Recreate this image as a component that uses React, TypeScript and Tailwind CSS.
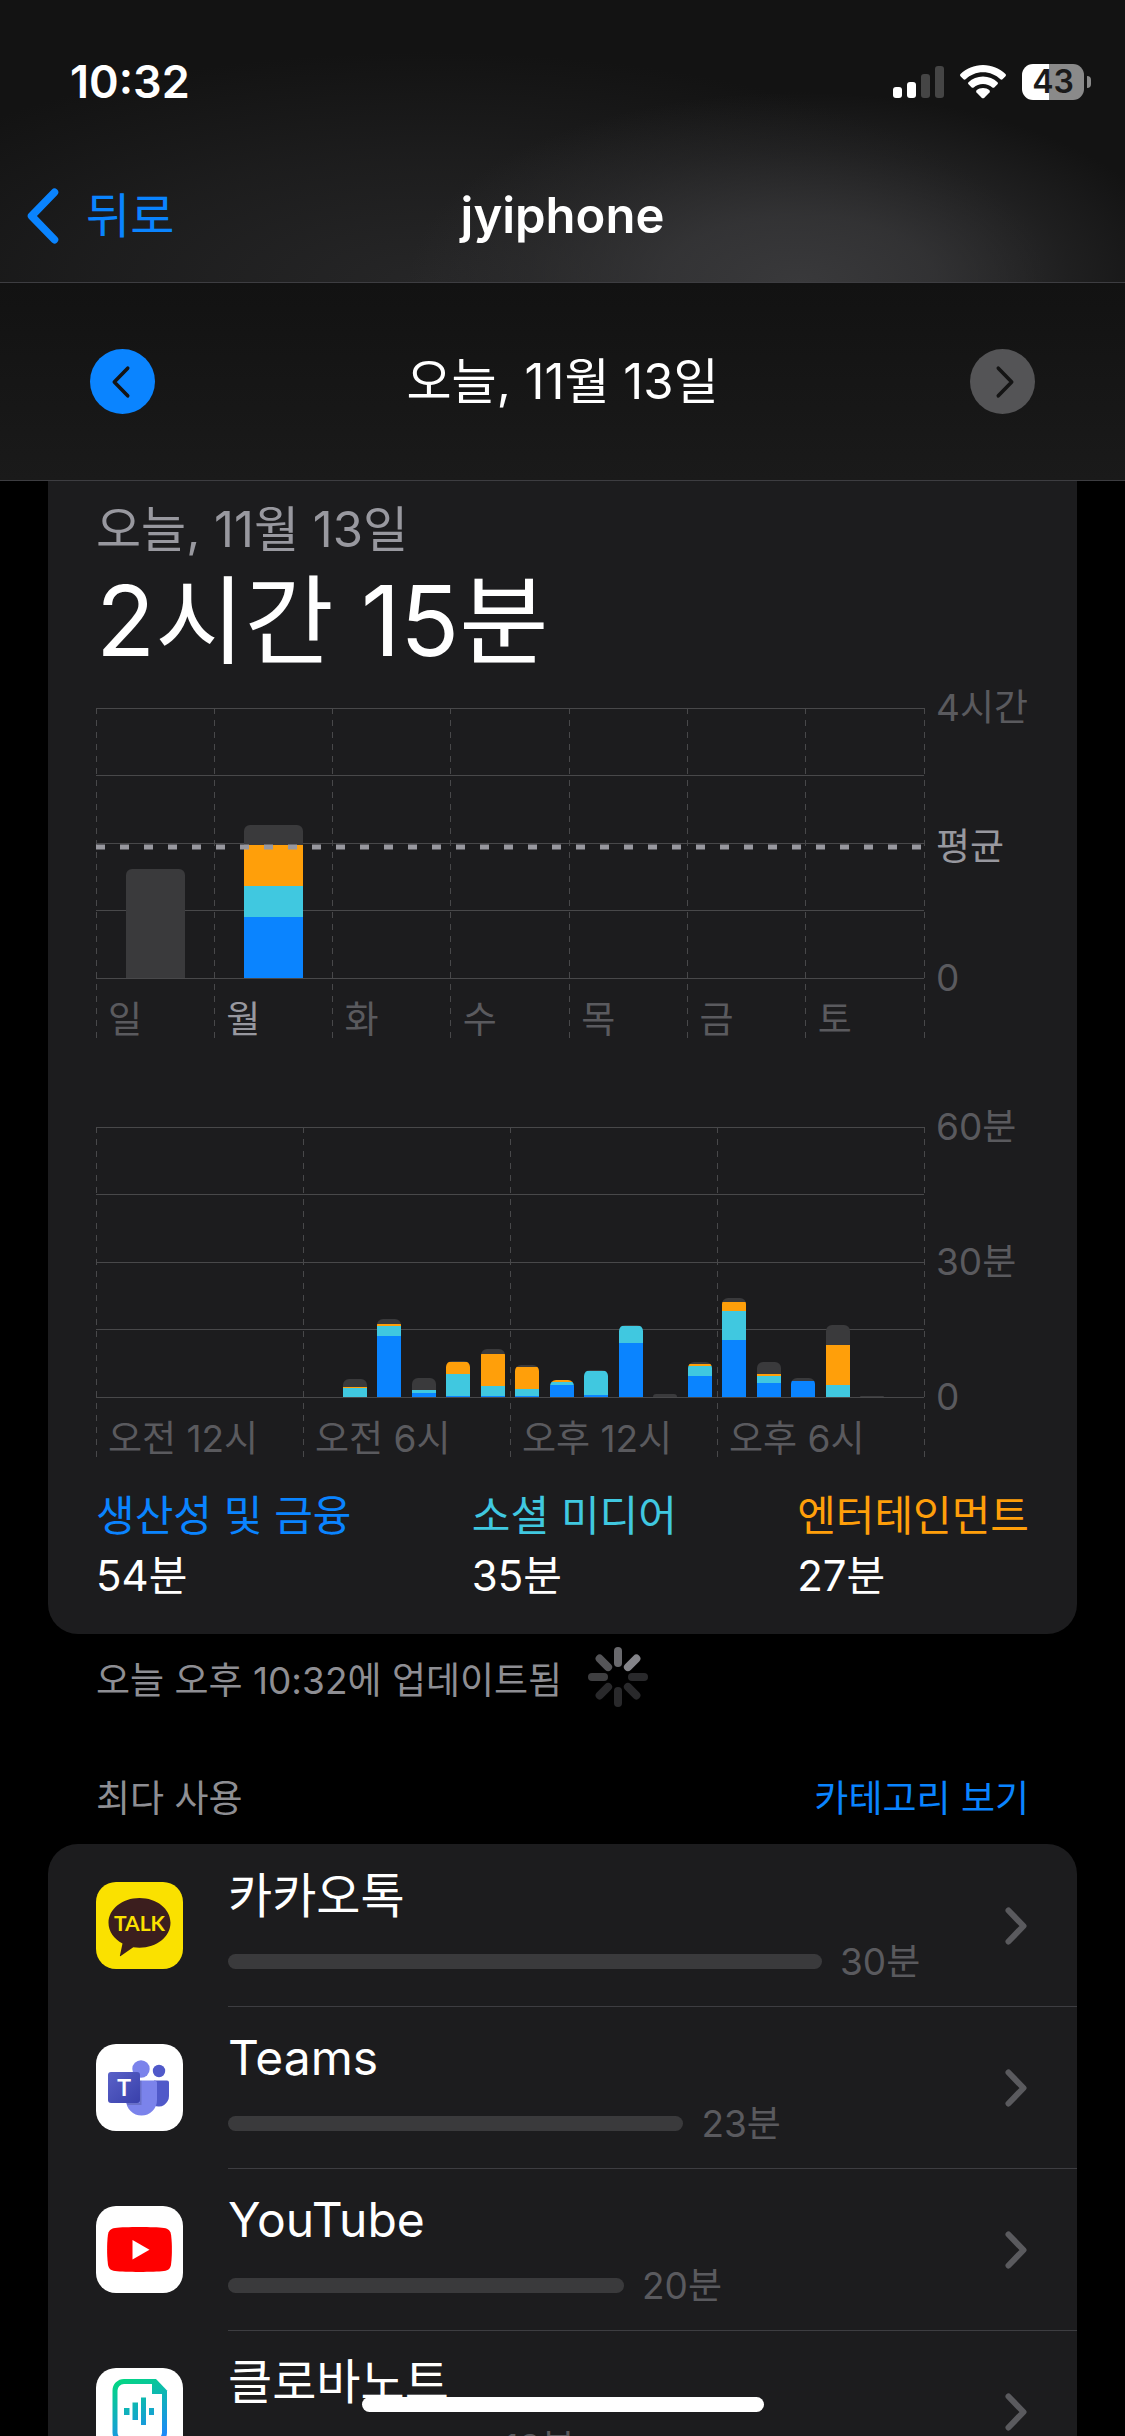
import type { ReactNode } from "react"

type Category = "productivity" | "social" | "entertainment" | "other"

// segment heights are pixels of the plot, listed from top to bottom
interface Bar {
  label: string
  segments: [Category, number][]
}

interface AppUsage {
  name: string
  minutes: number
  icon: ReactNode
}

interface Mark {
  label: string
  at: number
  strong?: boolean
}

const PLOT_HEIGHT = 270
const WEEK_AVERAGE = 139

const FILLS: Record<Category, string> = {
  productivity: "bg-[#0a84ff]",
  social: "bg-[#40c8e0]",
  entertainment: "bg-[#ff9f0a]",
  other: "bg-[#3a3a3c]",
}

const week: Bar[] = [
  { label: "일", segments: [["other", 109]] },
  {
    label: "월",
    segments: [["other", 20], ["entertainment", 41], ["social", 31], ["productivity", 61]],
  },
  { label: "화", segments: [] },
  { label: "수", segments: [] },
  { label: "목", segments: [] },
  { label: "금", segments: [] },
  { label: "토", segments: [] },
]

const HOUR_ORDER: Category[] = ["other", "entertainment", "social", "productivity"]

// one entry per hour, values in HOUR_ORDER
const hourly: number[][] = [
  [], [], [], [], [], [], [],
  [8, 1, 9, 0],
  [5, 2, 10, 61],
  [12, 0, 3, 4],
  [1, 12, 22, 1],
  [5, 32, 10, 1],
  [2, 22, 7, 1],
  [0, 2, 3, 12],
  [1, 0, 24, 2],
  [1, 0, 17, 54],
  [3, 0, 0, 0],
  [2, 2, 10, 21],
  [4, 9, 29, 57],
  [12, 2, 7, 14],
  [3, 0, 0, 16],
  [20, 40, 12, 0],
  [1, 0, 0, 0],
  [],
]

const day: Bar[] = hourly.map((values, hour) => ({
  label: String(hour),
  segments: values.map((value, i) => [HOUR_ORDER[i], value] as [Category, number]),
}))

const legend = [
  { name: "생산성 및 금융", time: "54분", color: "text-[#0a84ff]" },
  { name: "소셜 미디어", time: "35분", color: "text-[#40c8e0]" },
  { name: "엔터테인먼트", time: "27분", color: "text-[#ff9f0a]" },
]

function Chevron({ className, weight, direction }: { className: string; weight: number; direction: "left" | "right" }) {
  return (
    <svg viewBox="0 0 22 38" className={className} fill="none" stroke="currentColor" strokeWidth={weight} strokeLinecap="round" strokeLinejoin="round" aria-hidden="true">
      <path d={direction === "left" ? "M18.5 3.5 3.5 19l15 15.5" : "M3.5 3.5 18.5 19l-15 15.5"} />
    </svg>
  )
}

function StatusBar() {
  return (
    <div className="flex items-center justify-between pt-[54px] pr-[34px] pl-[70px]">
      <time className="text-[45px] leading-[56px] font-semibold">10:32</time>
      <div className="flex items-center gap-4">
        <svg viewBox="0 0 51 33" className="h-[33px] w-[51px]" role="img" aria-label="신호 세기">
          <rect x="0" y="21" width="9" height="11" rx="3" fill="#fff" />
          <rect x="14" y="16" width="9" height="16" rx="3" fill="#fff" />
          <rect x="28" y="8" width="9" height="24" rx="3" fill="#454545" />
          <rect x="42" y="0" width="9" height="32" rx="3" fill="#454545" />
        </svg>
        <svg viewBox="0 0 46 34" className="h-[34px] w-[46px]" fill="#fff" role="img" aria-label="Wi-Fi">
          <path d="M23 0C14.200 0 6.300 3.500.5 9.100c-.6.600-.6 1.500 0 2.100l3 3c.6.600 1.500.600 2.100 0C10.100 9.900 16.200 7.200 23 7.200s12.900 2.700 17.400 7c.6.600 1.500.600 2.100 0l3-3c.6-.6.6-1.500 0-2.100C39.700 3.500 31.800 0 23 0z" />
          <path d="M23 11.500c-5.600 0-10.700 2.200-14.500 5.700-.6.600-.6 1.500 0 2.100l3.200 3.100c.5.600 1.400.600 2 .1 2.500-2.200 5.700-3.500 9.300-3.500s6.800 1.300 9.300 3.500c.6.500 1.500.500 2-.1l3.200-3.100c.6-.6.6-1.500 0-2.100-3.800-3.500-8.900-5.700-14.500-5.700z" />
          <path d="M23 23c-2.500 0-4.700.9-6.400 2.300-.6.600-.6 1.500-.1 2.100l5.400 5.500c.6.600 1.600.600 2.200 0l5.400-5.500c.5-.6.5-1.500-.1-2.100C27.700 23.900 25.500 23 23 23z" />
        </svg>
        <div className="flex items-center gap-[3px]">
          <div className="flex h-9 w-[62px] items-center justify-center rounded-[11px] bg-linear-to-r from-white from-43% to-[#8a8a8a] to-43% text-[32px] leading-9 font-semibold text-[#1a1a1a]">
            43
          </div>
          <div className="h-3 w-1 rounded-r-full bg-[#8a8a8a]" />
        </div>
      </div>
    </div>
  )
}

function Plot({ bars, columns, labels, active, average, barWidth }: {
  bars: Bar[]
  columns: number
  labels: string[]
  active?: number
  average?: number
  barWidth: string
}) {
  return (
    <div className="grid flex-1 grid-rows-[271px_66px]">
      <svg className="col-start-1 row-span-2 row-start-1 h-[330px] w-full overflow-visible" stroke="#48484a" strokeWidth="1" shapeRendering="crispEdges" aria-hidden="true">
        {[0, 67, 135, 202, 270].map((y) => (
          <line key={y} x1="0" x2="100%" y1={y + 0.5} y2={y + 0.5} />
        ))}
        {Array.from({ length: columns + 1 }, (_, i) => (
          <line key={i} x1={`${(i / columns) * 100}%`} x2={`${(i / columns) * 100}%`} y1="0" y2="330" strokeDasharray="6 6" />
        ))}
      </svg>
      <div className="col-start-1 row-start-1 flex h-[270px]">
        {bars.map((bar) => (
          <div key={bar.label} className="flex flex-1 items-end justify-center">
            <div className={`overflow-hidden rounded-t-[6px] ${barWidth}`}>
              {bar.segments.map(([category, height]) => (
                <div key={category} className={FILLS[category]} style={{ height }} />
              ))}
            </div>
          </div>
        ))}
      </div>
      {average !== undefined && (
        <svg className="col-start-1 row-start-1 h-[271px] w-full" aria-hidden="true">
          <line x1="0" x2="100%" y1={average} y2={average} stroke="#98989f" strokeWidth="5" strokeDasharray="9 15" />
        </svg>
      )}
      <div className="col-start-1 row-start-2 flex pt-4 text-[37px] leading-[50px] text-[#5a5a5e]">
        {labels.map((label, i) => (
          <span key={label} className={`flex-1 pl-3 ${i === active ? "text-[#98989f]" : ""}`}>
            {label}
          </span>
        ))}
      </div>
    </div>
  )
}

function Scale({ marks }: { marks: Mark[] }) {
  return (
    <div className="-mt-5 grid w-[105px] content-start items-start pl-3 text-[37px] leading-10 whitespace-nowrap text-[#5a5a5e]">
      {marks.map((mark) => (
        <span key={mark.label} className={`col-start-1 row-start-1 ${mark.strong ? "text-[#98989f]" : ""}`} style={{ marginTop: mark.at }}>
          {mark.label}
        </span>
      ))}
    </div>
  )
}

function Spinner() {
  const shades = ["#69696d", "#848489", "#29292b", "#29292b", "#29292b", "#29292b", "#3f3f41", "#555558"]
  return (
    <svg viewBox="-30 -30 60 60" className="size-[60px]" strokeWidth="8" strokeLinecap="round" role="img" aria-label="로딩 중">
      {shades.map((shade, i) => (
        <line key={i} y1="-14" y2="-26" stroke={shade} transform={`rotate(${i * 45})`} />
      ))}
    </svg>
  )
}

function TalkIcon() {
  return (
    <svg viewBox="0 0 87 87" className="size-full bg-[#fae100]" aria-hidden="true">
      <path d="M43.500 16C26.300 16 12.500 27 12.500 40.800c0 8.700 5.500 16.200 14 20.700l-2.600 12.200c-.1.500.4.700.8.400l12.600-8.900c2 .3 4.100.5 6.200.5 17.200 0 31-11 31-24.900S60.700 16 43.500 16z" fill="#3b1e1e" />
      <text x="43.500" y="49" textAnchor="middle" fontFamily="Lato, sans-serif" fontSize="21" fontWeight="700" fill="#fae100">TALK</text>
    </svg>
  )
}

function TeamsIcon() {
  return (
    <svg viewBox="0 0 87 87" className="size-full bg-white" aria-hidden="true">
      <defs>
        <linearGradient id="teams" x1="0" y1="0" x2="1" y2="1">
          <stop offset="0" stopColor="#5a62c8" />
          <stop offset="1" stopColor="#3940ab" />
        </linearGradient>
      </defs>
      <circle cx="63" cy="27" r="6.200" fill="#5059c9" />
      <path d="M58 36.500h13a2 2 0 0 1 2 2V52a10.500 10.500 0 0 1-15 9.500z" fill="#5059c9" />
      <circle cx="45" cy="25" r="8.700" fill="#7b83eb" />
      <path d="M30 36.500h28.500a2.500 2.500 0 0 1 2.500 2.500v17a15.500 15.500 0 0 1-31 0z" fill="#7b83eb" />
      <path d="M44 36.500h1.500V61H31.500a15 15 0 0 1-1-2H44z" fill="#000" opacity="0.15" />
      <rect x="12" y="28" width="32" height="31" rx="3" fill="url(#teams)" />
      <text x="28" y="52" textAnchor="middle" fontSize="23" fontWeight="600" fill="#fff">T</text>
    </svg>
  )
}

function YouTubeIcon() {
  return (
    <svg viewBox="0 0 87 87" className="size-full bg-white" aria-hidden="true">
      <path d="M43.500 21c-10 0-19 .3-24.500.9-4.500.5-6.600 3-7.100 7.100-.6 5-.8 9.500-.8 14.500s.2 9.500.8 14.500c.5 4.100 2.600 6.600 7.100 7.100 5.500.6 14.500.9 24.500.9s19-.3 24.500-.9c4.500-.5 6.600-3 7.100-7.100.6-5 .8-9.500.8-14.500s-.2-9.500-.8-14.500c-.5-4.100-2.600-6.600-7.100-7.100-5.500-.6-14.500-.9-24.500-.9z" fill="#f00" />
      <path d="M36.500 34v19.500L53.500 43.700z" fill="#fff" />
    </svg>
  )
}

function ClovaNoteIcon() {
  return (
    <svg viewBox="0 0 87 87" className="size-full bg-white" aria-hidden="true">
      <defs>
        <linearGradient id="clova" gradientUnits="userSpaceOnUse" x1="30" y1="11" x2="55" y2="76">
          <stop offset="0" stopColor="#04d585" />
          <stop offset="1" stopColor="#1f84ff" />
        </linearGradient>
      </defs>
      <path d="M59 13.500H28a9 9 0 0 0-9 9v42a9 9 0 0 0 9 9h31.500a9 9 0 0 0 9-9V24" fill="none" stroke="url(#clova)" strokeWidth="5" />
      <path d="M56 11h4l11 11.500V26H56z" fill="url(#clova)" />
      <path d="M28 40h5.500v7H28zM36.500 34.500H42V52h-5.500zM45 29.500h5V57h-5zM53 40h5v7h-5z" fill="url(#clova)" />
    </svg>
  )
}

const apps: AppUsage[] = [
  { name: "카카오톡", minutes: 30, icon: <TalkIcon /> },
  { name: "Teams", minutes: 23, icon: <TeamsIcon /> },
  { name: "YouTube", minutes: 20, icon: <YouTubeIcon /> },
  { name: "클로바노트", minutes: 13, icon: <ClovaNoteIcon /> },
]

function AppRow({ app, longest, first }: { app: AppUsage; longest: number; first: boolean }) {
  return (
    <li>
      <button type="button" className="flex w-full items-center pl-12 text-left">
        <span className="size-[87px] shrink-0 overflow-hidden rounded-[20px]">{app.icon}</span>
        <span className={`ml-[45px] flex h-[162px] flex-1 items-center border-t pr-[50px] ${first ? "border-transparent" : "border-[#3d3d41]"}`}>
          <span className="flex flex-1 flex-col pr-[90px]">
            <span className="text-[48px] leading-[72px]">{app.name}</span>
            <span className="flex items-center gap-[18px] pr-[93px] text-[37px] leading-[60px] whitespace-nowrap text-[#5a5a5e]">
              <span className="h-[15px] shrink-0 rounded-full bg-[#3a3a3c]" style={{ width: `${(app.minutes / longest) * 100}%` }} />
              {app.minutes}분
            </span>
          </span>
          <Chevron className="h-[38px] w-[22px] text-[#5a5a5e]" weight={6} direction="right" />
        </span>
      </button>
    </li>
  )
}

export default function App() {
  const longest = Math.max(...apps.map((app) => app.minutes))

  return (
    <div className="relative flex h-screen flex-col overflow-hidden bg-black font-['Inter','Noto_Sans_CJK_KR',sans-serif] text-white">
      <header className="h-[283px] shrink-0 border-b border-[#3d3d41] bg-[#131313] bg-[radial-gradient(ellipse_390px_190px_at_71%_100%,#39393bff_0%,#39393bc8_35%,#39393b50_70%,#39393b00_100%),radial-gradient(ellipse_620px_230px_at_38%_100%,#262627ff_0%,#26262780_55%,#26262700_100%)]">
        <StatusBar />
        <nav className="grid grid-cols-3 items-center px-[26px] pt-[66px]">
          <a href="#back" className="flex items-center gap-[26px] text-[48px] leading-[80px] text-[#0a84ff]">
            <Chevron className="h-[58px] w-[34px]" weight={5} direction="left" />
            뒤로
          </a>
          <h1 className="text-center text-[49px] leading-[80px] font-semibold">jyiphone</h1>
        </nav>
      </header>

      <div className="flex h-[198px] shrink-0 items-center justify-between border-b border-[#3d3d41] bg-linear-to-b from-[#121212] to-[#1a1a1a] px-[90px]">
        <button type="button" aria-label="이전 날짜" className="flex size-[65px] items-center justify-center rounded-full bg-[#0a84ff] text-[#141414]">
          <Chevron className="mr-1 h-[34px] w-5" weight={4} direction="left" />
        </button>
        <h2 className="text-[49px] leading-[70px]">오늘, 11월 13일</h2>
        <button type="button" aria-label="다음 날짜" className="flex size-[65px] items-center justify-center rounded-full bg-[#545456] text-[#141414]">
          <Chevron className="ml-1 h-[34px] w-5" weight={4} direction="right" />
        </button>
      </div>

      <main className="flex-1 overflow-hidden px-12">
        <section className="rounded-b-[30px] bg-[#1c1c1e] px-12 pt-4 pb-7">
          <p className="text-[49px] leading-[66px] text-[#98989f]">오늘, 11월 13일</p>
          <p className="text-[97px] leading-[116px]">2시간 15분</p>

          <div className="flex pt-[29px]">
            <Plot bars={week} columns={7} labels={week.map((d) => d.label)} active={1} average={WEEK_AVERAGE} barWidth="w-1/2" />
            <Scale
              marks={[
                { label: "4시간", at: 0 },
                { label: "평균", at: WEEK_AVERAGE, strong: true },
                { label: "0", at: PLOT_HEIGHT },
              ]}
            />
          </div>

          <div className="flex pt-[82px]">
            <Plot bars={day} columns={4} labels={["오전 12시", "오전 6시", "오후 12시", "오후 6시"]} barWidth="w-7/10" />
            <Scale
              marks={[
                { label: "60분", at: 0 },
                { label: "30분", at: PLOT_HEIGHT / 2 },
                { label: "0", at: PLOT_HEIGHT },
              ]}
            />
          </div>

          <dl className="flex justify-between pt-[22px]">
            {legend.map((item) => (
              <div key={item.name}>
                <dt className={`text-[42px] leading-[60px] ${item.color}`}>{item.name}</dt>
                <dd className="text-[42px] leading-[60px]">{item.time}</dd>
              </div>
            ))}
          </dl>
        </section>

        <div className="flex items-center gap-[26px] px-12 pt-3">
          <p className="pt-2 text-[37px] leading-[54px] text-[#8e8e93]">오늘 오후 10:32에 업데이트됨</p>
          <Spinner />
        </div>

        <div className="flex items-center justify-between px-12 pt-[64px] pb-[18px] text-[37px] leading-[54px]">
          <h3 className="text-[#8e8e93]">최다 사용</h3>
          <button type="button" className="text-[#0a84ff]">카테고리 보기</button>
        </div>

        <ul className="rounded-t-[30px] bg-[#1c1c1e]">
          {apps.map((app, i) => (
            <AppRow key={app.name} app={app} longest={longest} first={i === 0} />
          ))}
        </ul>
      </main>

      <div className="absolute inset-x-0 bottom-6 mx-auto h-[15px] w-[402px] rounded-full bg-white" />
    </div>
  )
}
